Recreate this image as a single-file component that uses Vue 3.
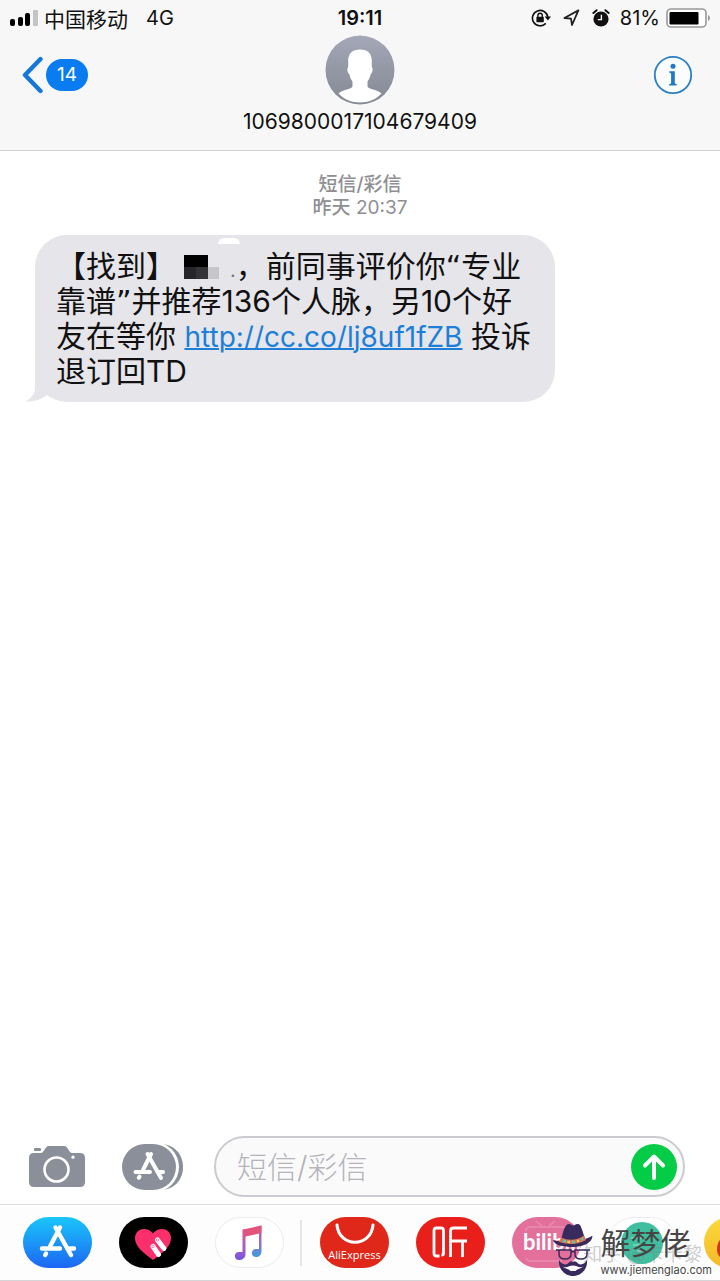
<template>
    <div class="phone">
        <header class="top">
            <div class="status-bar">
                <div class="status-left">
                    <svg class="signal" width="28" height="18" viewBox="0 0 28 18">
                        <rect x="0" y="10" width="5" height="7" rx="2" fill="#000" />
                        <rect x="8" y="8" width="5" height="9" rx="2" fill="#000" />
                        <rect x="15" y="4" width="5" height="13" rx="2" fill="#000" />
                        <rect x="23" y="1" width="5" height="16" rx="1" fill="#c4c4c6" />
                    </svg>
                    <span>中国移动</span>
                    <span class="network">4G</span>
                </div>
                <div class="clock">19:11</div>
                <div class="status-right">
                    <svg width="20" height="18" viewBox="0 0 20 18">
                        <path d="M16.8 8A7.7 7.7 0 1 0 14.8 14.4" fill="none" stroke="#111" stroke-width="1.6" />
                        <path d="M13.6 7.6H20L16.9 11.6Z" fill="#111" />
                        <rect x="5.4" y="7.8" width="7.4" height="5.4" rx="0.6" fill="#111" />
                        <path d="M6.9 8.2V6.4a2.2 2.2 0 0 1 4.4 0V8.2" fill="none" stroke="#111" stroke-width="1.4" />
                    </svg>
                    <svg width="17" height="18" viewBox="0 0 17 18">
                        <path d="M15.4 1.4L1.4 9L8 9.6L9 16Z" fill="none" stroke="#222" stroke-width="1.8" stroke-linejoin="round" />
                    </svg>
                    <svg width="18" height="18" viewBox="0 0 18 18">
                        <circle cx="9" cy="10" r="7.6" fill="#111" />
                        <path d="M1.4 4L4.6 1.2M16.6 4L13.4 1.2" stroke="#111" stroke-width="2" stroke-linecap="round" />
                        <path d="M9.4 5.8V10.6H5.8" fill="none" stroke="#f7f7f7" stroke-width="1.4" />
                    </svg>
                    <span class="percent">81%</span>
                    <svg width="44" height="20" viewBox="0 0 44 20">
                        <rect x="1" y="1" width="39" height="18" rx="4" fill="#fff" stroke="#98989a" stroke-width="1.6" />
                        <rect x="3.5" y="4" width="29" height="12.5" rx="1" fill="#000" />
                        <path d="M42 7v6q2-1 2-3t-2-3z" fill="#98989a" />
                    </svg>
                </div>
            </div>
            <div class="nav">
                <button class="back" type="button" aria-label="返回">
                    <svg width="22" height="38" viewBox="0 0 22 38">
                        <path d="M18.5 3L3 19L18.5 35" fill="none" stroke="#1577d8" stroke-width="4.4" stroke-linecap="round" stroke-linejoin="round" />
                    </svg>
                    <span class="unread">{{ unread }}</span>
                </button>
                <div class="contact">
                    <svg width="70" height="70" viewBox="0 0 70 70">
                        <defs>
                            <linearGradient id="avatar" x1="0" y1="0" x2="0" y2="1">
                                <stop offset="0" stop-color="#a3a7b7" />
                                <stop offset="1" stop-color="#858993" />
                            </linearGradient>
                        </defs>
                        <circle cx="35" cy="35" r="34.5" fill="url(#avatar)" />
                        <path d="M35 14.5C43 14.5 47.3 19 46.8 27C46.8 29 46.6 31 47 32.4C48.4 33 47.4 38.2 45.6 39.2C45 42.5 43.8 44.5 42.5 46.5V51C42.5 54.5 52 54 56.5 58.5C51 64.5 43.5 67.5 35 67.5S19 64.5 13.5 58.5C18 54 27.500 54.5 27.5 51V46.5C26.2 44.5 25 42.5 24.4 39.2C22.6 38.2 21.6 33 23 32.4C23.4 31 23.2 29 23.2 27C22.7 19 27 14.5 35 14.5Z" fill="#fff" />
                    </svg>
                    <h1 class="number">{{ sender }}</h1>
                </div>
                <button class="info" type="button" aria-label="详情">
                    <svg width="40" height="40" viewBox="0 0 40 40">
                        <circle cx="20" cy="20" r="18.2" fill="#fbfcfd" stroke="#2b7fc4" stroke-width="1.8" />
                        <circle cx="20" cy="11.2" r="2.5" fill="#1f78c8" />
                        <path d="M16.3 16.2h5.5v12.2l1.9.8v1.2h-7.6v-1.2l2-.8v-10l-1.8-.8z" fill="#1f78c8" />
                    </svg>
                </button>
            </div>
        </header>

        <main class="thread">
            <div class="stamp">
                <b>短信/彩信</b>
                <span><b>昨天</b> 20:37</span>
            </div>
            <div class="bubble">
                <span class="glare"></span>
                <svg class="tail" width="26" height="40" viewBox="0 0 26 40">
                    <path d="M10 0V26C10 32 6 37 0 39.5C9 40 17 37 22 33L26 0Z" fill="#e5e5ea" />
                </svg>
                <p>
                    【找到】<svg class="mosaic" width="36" height="24" viewBox="0 0 36 24">
                        <rect x="0" y="0" width="24" height="12" fill="#000" />
                        <rect x="0" y="12" width="12" height="12" fill="#25252a" />
                        <rect x="12" y="12" width="12" height="12" fill="#323237" />
                        <rect x="24" y="12" width="11" height="12" fill="#c5c5ca" />
                    </svg><span class="faint">.</span>，前同事评价你<span class="quote">“</span>专业<br>
                    靠谱<span class="quote">”</span>并推荐136个人脉，另10个好<br>
                    友在等你 <a href="#">http://cc.co/lj8uf1fZB</a> 投诉<br>
                    退订回TD
                </p>
            </div>
        </main>

        <footer class="bottom">
            <form class="composer" @submit.prevent>
                <button type="button" aria-label="相机">
                    <svg width="56" height="43" viewBox="0 0 56 43">
                        <path d="M5 8H12C15 8 16 1 20 1H35C39 1 40 8 43 8H51Q56 8 56 13V37Q56 42 51 42H5Q0 42 0 37V13Q0 8 5 8Z" fill="#8a8f99" />
                        <rect x="5" y="3" width="7" height="3" rx="1" fill="#8a8f99" />
                        <circle cx="27.5" cy="24.5" r="12" fill="none" stroke="#fff" stroke-width="2.6" />
                        <circle cx="44" cy="12.2" r="1.6" fill="#fff" />
                    </svg>
                </button>
                <button type="button" aria-label="应用">
                    <svg width="62" height="46" viewBox="0 0 62 46">
                        <path d="M34 0H38C52 0 61 10 61 23S52 46 38 46H34Z" fill="#8a8f99" />
                        <rect x="-2" y="-2" width="59" height="50" rx="25" fill="#fff" />
                        <rect x="0" y="0" width="54" height="46" rx="23" fill="#8a8f99" />
                        <path d="M29 10L21 26M17.5 32.5L16.8 33.8M25.5 10L39 34M13.5 28H28M37 28H41" stroke="#fff" stroke-width="4" stroke-linecap="round" />
                    </svg>
                </button>
                <div class="field">
                    <input v-model="draft" type="text" placeholder="短信/彩信" aria-label="短信/彩信">
                    <button type="submit" aria-label="发送">
                        <svg width="46" height="46" viewBox="0 0 46 46">
                            <circle cx="23" cy="23" r="23" fill="#05cc47" />
                            <path d="M23 34V13M14 21.5L23 12.5L32 21.5" fill="none" stroke="#fff" stroke-width="4" stroke-linecap="round" stroke-linejoin="round" />
                        </svg>
                    </button>
                </div>
            </form>

            <nav class="apps">
                <div class="group">
                    <button class="app store" type="button" aria-label="App Store">
                        <svg width="69" height="51" viewBox="0 0 69 51">
                            <path d="M37 10.5L27 29.5M23 36.5L22.2 38M32.5 10.5L48 38M19 31.5H37M45 31.5H51" stroke="#fff" stroke-width="4.4" stroke-linecap="round" />
                        </svg>
                    </button>
                    <button class="app touch" type="button" aria-label="Digital Touch">
                        <svg width="69" height="51" viewBox="0 0 69 51">
                            <path d="M34 43C26 37 16 30 16 21.5C16 11 28 9 34 16.5C40 9 52 11 52 21.5C52 30 42 37 34 43Z" fill="#fb2f6b" />
                            <path d="M34 29.5L39.5 37.5M38.5 23L45 31.5" stroke="#fff" stroke-width="5" stroke-linecap="round" />
                            <g fill="none" stroke="#f77fa5">
                                <circle cx="34" cy="29.5" r="1.2" />
                                <circle cx="38.5" cy="23" r="1.2" />
                            </g>
                        </svg>
                    </button>
                    <button class="app music" type="button" aria-label="音乐">
                        <svg width="67" height="49" viewBox="0 0 67 49">
                            <defs>
                                <linearGradient id="noteLeft" x1="0" y1="0" x2="0" y2="1">
                                    <stop offset="0" stop-color="#e8527b" />
                                    <stop offset="0.5" stop-color="#b65cc0" />
                                    <stop offset="1" stop-color="#7355df" />
                                </linearGradient>
                                <linearGradient id="noteRight" x1="0" y1="0" x2="0" y2="1">
                                    <stop offset="0" stop-color="#ed5273" />
                                    <stop offset="0.5" stop-color="#9b6bc8" />
                                    <stop offset="1" stop-color="#389fe0" />
                                </linearGradient>
                            </defs>
                            <path d="M27 11.5L45.5 7.5V15L29.5 18.5L27 21Z" fill="#e4537c" />
                            <path d="M26.5 11.5H29.5V36C29.5 40 26 42 23 42C17.5 42 17.5 34 23 34H26.5Z" fill="url(#noteLeft)" />
                            <path d="M43 8L45.5 7.5V33C45.5 37 43 39 40 39C34.5 39 34.5 31 40 31H43Z" fill="url(#noteRight)" />
                        </svg>
                    </button>
                </div>
                <span class="divider"></span>
                <div class="group">
                    <button class="app ali" type="button">
                        <svg width="40" height="22" viewBox="0 0 40 22">
                            <path d="M2 2C4 25 36 25 38 2" fill="none" stroke="#fff" stroke-width="3" stroke-linecap="round" />
                        </svg>
                        <span>AliExpress</span>
                    </button>
                    <button class="app ting" type="button" aria-label="听">
                        <svg width="69" height="51" viewBox="0 0 69 51">
                            <path d="M23.5 39H20.5Q18 39 18 36.5V13.5Q18 11 20.5 11H25Q27.5 11 27.5 13.5V36.5Q27.5 38 25.5 38" fill="none" stroke="#fff" stroke-width="2.8" />
                            <path d="M51 11H37.5Q34.5 11 34.5 14V40M34.5 24H51M46.5 24V40" fill="none" stroke="#fff" stroke-width="2.8" />
                        </svg>
                    </button>
                    <button class="app bili" type="button">
                        <svg width="69" height="51" viewBox="0 0 69 51">
                            <path d="M24 4L30 9M43 4L37 9M14 14Q14 10 18 10H51Q55 10 55 15M14 41Q15 44 18 44H50" fill="none" stroke="#e985aa" stroke-width="2" />
                        </svg>
                        <span>bilibili</span>
                    </button>
                    <button class="app leaf" type="button" aria-label="应用">
                        <svg width="67" height="49" viewBox="0 0 67 49">
                            <circle cx="33" cy="25" r="21" fill="#3fbfa0" />
                            <path d="M22 20H34M24 27H44M28 33H38" stroke="#6fd0b8" stroke-width="2" />
                        </svg>
                    </button>
                    <button class="app bird" type="button" aria-label="应用">
                        <svg width="69" height="51" viewBox="0 0 69 51">
                            <path d="M34 17C18 17 13 24 13 32S18 44 34 44Z" fill="#d8321c" />
                        </svg>
                    </button>
                </div>
            </nav>
            <div class="zhihu">知乎 @卡卡黎</div>
            <div class="watermark">
                <svg width="40" height="55" viewBox="0 0 40 55">
                    <path d="M8 19C10 9 12 2 16 2C18 2 19 4 21 3.5C25 1 27 2 28 5C30 10 31 14 32 17C36 16 38 14 39.5 14C39 21 30 25 20 25S1 23 0 18C3 18 5 20 8 19Z" fill="#392a5e" />
                    <path d="M8 15.5Q20 21 31 13.5L33 18Q21 25 6 20Z" fill="#d87355" />
                    <path d="M10 18.5L13 19.5M19 20L22 20M28 17.5L30 16.5" stroke="#5fc6b2" stroke-width="2.5" />
                    <path d="M14.5 19.5L17 20.5M24 19.5L26 18.5" stroke="#f3d36b" stroke-width="2" />
                    <path d="M6 28H18V32Q18 37 12 37T6 32ZM22 28H34V32Q34 37 28 37T22 32ZM18 30Q20 29 22 30M3 28H6M34 28H37" fill="none" stroke="#392a5e" stroke-width="1.5" />
                    <path d="M6 38C8 42 12 43.5 15 41.5C17 39 19 38.5 20 40C21 38.5 23 39 25 41.5C28 43.5 32 42 34 38C35 47 28 54 20 54S5 47 6 38Z" fill="#392a5e" />
                    <path d="M9.5 44.5C14 46.5 16 43.5 20 43.5S26 46.5 30.5 44.5C27 47 24 47 22.5 49H17.5C16 47 13 47 9.5 44.5Z" fill="#fff" />
                </svg>
                <div class="brand">
                    <strong>解梦佬</strong>
                    <span>www.jiemenglao.com</span>
                </div>
            </div>
        </footer>
    </div>
</template>

<script setup>
import { ref } from 'vue';

const unread = ref(14);
const sender = ref('1069800017104679409');
const draft = ref('');
</script>

<style>
body {
    margin: 0;
    background: #fff;
}
</style>

<style scoped>
.phone {
    display: flex;
    flex-direction: column;
    min-height: 100vh;
    font-family: Inter, "Noto Sans CJK SC", sans-serif;
    color: #111;
    overflow: hidden;
}

button {
    padding: 0;
    border: 0;
    background: none;
    font-family: inherit;
    cursor: pointer;
}

svg {
    display: block;
    flex: none;
}

.top {
    background: #f7f7f7;
    border-bottom: 1px solid #d2d2d4;
}

.status-bar {
    display: grid;
    grid-template-columns: 1fr auto 1fr;
    align-items: center;
    height: 35px;
    padding: 0 10px;
    font-size: 20px;
}

.status-left,
.status-right {
    display: flex;
    align-items: center;
}

.status-left {
    gap: 6px;
    font-size: 21px;
}

.network {
    margin-left: 12px;
    font-size: 20px;
}

.clock {
    font-weight: 600;
}

.status-right {
    justify-content: flex-end;
    gap: 12px;
}

.percent {
    margin: 0 -6px 0 -2px;
}

.nav {
    display: grid;
    grid-template-columns: 1fr auto 1fr;
    align-items: start;
    height: 115px;
    padding: 0 22px;
}

.back,
.info {
    display: flex;
    align-items: center;
    height: 80px;
}

.back {
    justify-self: start;
    gap: 2px;
}

.info {
    justify-self: end;
    margin-right: 5px;
}

.unread {
    width: 42px;
    border-radius: 16px;
    background: #0a7cf2;
    color: #fff;
    font-size: 19px;
    line-height: 32px;
    text-align: center;
}

.contact {
    display: flex;
    flex-direction: column;
    align-items: center;
}

.number {
    margin: 5px 0 0;
    font-size: 21px;
    font-weight: 400;
    line-height: 24px;
}

.thread {
    flex: 1;
    padding: 22px 35px;
}

.stamp {
    display: flex;
    flex-direction: column;
    align-items: center;
    margin-bottom: 16px;
    color: #8e8e93;
    font-size: 19px;
    line-height: 23px;
}

.stamp b {
    font-weight: 500;
}

.bubble {
    position: relative;
    width: 80%;
    box-sizing: border-box;
    padding: 14px 20px 13px 21px;
    border-radius: 32px;
    background: #e5e5ea;
}

.bubble p {
    margin: 0;
    font-size: 30px;
    line-height: 35px;
    white-space: nowrap;
}

.bubble a {
    color: #1d7fd8;
    font-size: 28px;
    line-height: 28px;
    text-decoration: underline;
    text-decoration-thickness: 2px;
}

.quote {
    font-family: "DejaVu Sans", sans-serif;
    line-height: 28px;
}

.mosaic {
    display: inline-block;
    margin: 0 10px 0 8px;
    vertical-align: -2px;
}

.faint {
    color: #77777c;
    font-size: 20px;
    line-height: 20px;
}

.tail {
    position: absolute;
    left: -10px;
    bottom: 0;
}

.glare {
    position: absolute;
    top: 3px;
    left: 183px;
    width: 22px;
    height: 6px;
    border-radius: 11px 11px 0 0;
    background: #fff;
}

.bottom {
    position: relative;
}

.composer {
    display: flex;
    align-items: center;
    gap: 37px;
    padding: 0 35px 7px 29px;
}

.field {
    display: flex;
    flex: 1;
    align-items: center;
    box-sizing: border-box;
    min-width: 0;
    height: 61px;
    margin-left: -7px;
    padding: 0 6px 0 21px;
    border: 2px solid #cbcbd0;
    border-radius: 31px;
    background: #fafafa;
}

.field input {
    flex: 1;
    min-width: 0;
    padding: 0;
    border: 0;
    outline: 0;
    background: none;
    font-family: inherit;
    font-size: 30px;
    font-weight: 300;
}

.field input::placeholder {
    color: #b4b4ba;
    opacity: 1;
}

.apps {
    display: flex;
    align-items: center;
    height: 75px;
    padding-left: 23px;
    border-top: 1px solid #dedee0;
    border-bottom: 1px solid #d5d5d7;
    background: #fdfdfd;
    overflow: hidden;
}

.group {
    display: flex;
    flex: none;
    gap: 27px;
}

.divider {
    flex: none;
    width: 2px;
    height: 46px;
    margin: 0 18px 0 16px;
    background: #e4e4ea;
}

.app {
    display: flex;
    flex: none;
    flex-direction: column;
    align-items: center;
    box-sizing: border-box;
    width: 69px;
    height: 51px;
    border-radius: 26px;
    overflow: hidden;
    color: #fff;
}

.store {
    background: linear-gradient(#19c6fa, #1d66f3);
}

.touch {
    background: #000;
}

.music,
.leaf {
    border: 1px solid #ececee;
    background: #fff;
}

.ali {
    padding-top: 6px;
    background: #e0281a;
}

.ali span {
    font-family: "Open Sans", sans-serif;
    font-size: 11px;
    line-height: 20px;
}

.ting {
    background: #e81f1a;
}

.bili {
    position: relative;
    background: #e36f9b;
}

.bili span {
    position: absolute;
    top: 11px;
    left: 11px;
    font-family: Lato, sans-serif;
    font-size: 22px;
    font-weight: 700;
    line-height: 28px;
}

.bird {
    background: linear-gradient(#fbd93b, #f3b92a);
}

.zhihu {
    position: absolute;
    right: 18px;
    bottom: 12px;
    color: rgba(130, 130, 130, 0.4);
    font-size: 19px;
    line-height: 28px;
}

.watermark {
    position: absolute;
    right: 8px;
    bottom: 4px;
    display: flex;
    gap: 7px;
}

.brand {
    display: flex;
    flex-direction: column;
    color: #454545;
}

.brand strong {
    font-size: 30px;
    font-weight: 400;
    line-height: 42px;
}

.brand span {
    font-size: 11px;
    line-height: 13px;
}
</style>
